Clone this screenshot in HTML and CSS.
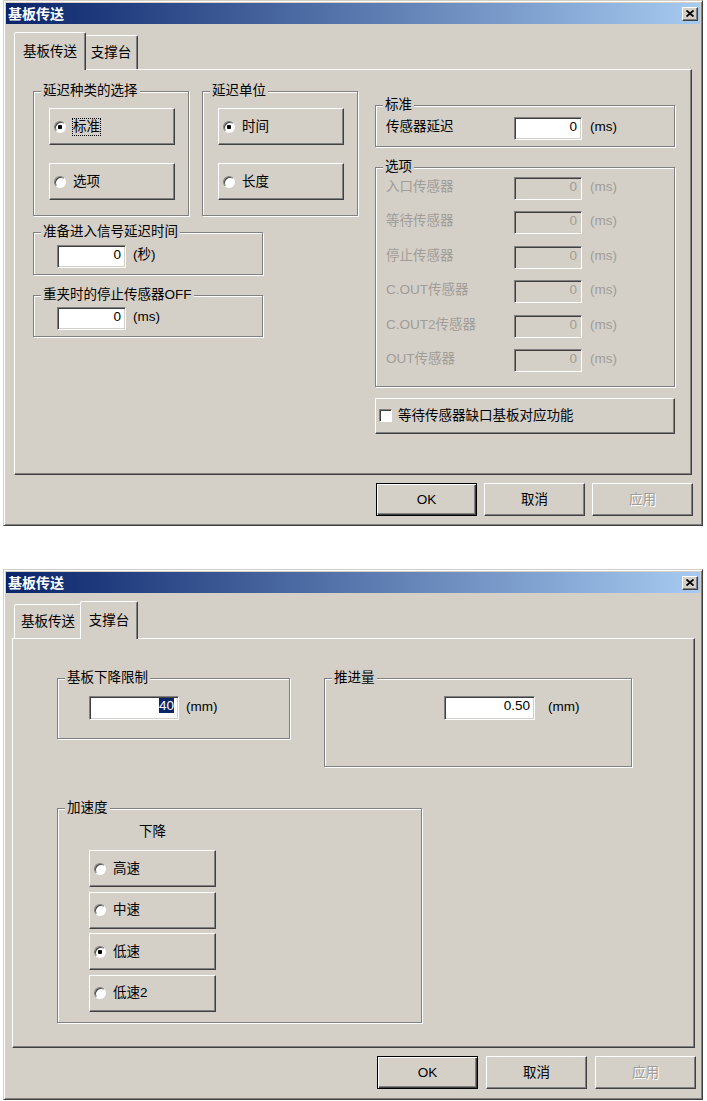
FILE: index.html
```html
<!DOCTYPE html>
<html lang="zh-CN">
<head>
    <meta charset="UTF-8">
    <title>基板传送</title>
    <link rel="stylesheet" href="styles.css">
</head>
<body>
    <!-- first page: 基板传送 -->
    <div class="dialog dialog-feed">
        <div class="titlebar">
            <span class="title">基板传送</span>
            <span class="close"><svg width="8" height="7" viewBox="0 0 8 7"><path d="M0.5 0.5 L7.5 6.5 M7.5 0.5 L0.5 6.5" stroke="#000" stroke-width="1.8" fill="none"/></svg></span>
        </div>
        <div class="tabs">
            <div class="tab tab-feed active">基板传送</div>
            <div class="tab tab-support">支撑台</div>
        </div>
        <div class="panel">
            <div class="feed-body">
                <div class="col-left">
                    <div class="group-row">
                        <div class="group group-small">
                            <span class="caption">延迟种类的选择</span>
                            <div class="choices">
                                <div class="choice"><span class="radio checked"></span><span class="focus">标准</span></div>
                                <div class="choice"><span class="radio"></span><span>选项</span></div>
                            </div>
                        </div>
                        <div class="group group-small">
                            <span class="caption">延迟单位</span>
                            <div class="choices">
                                <div class="choice"><span class="radio checked"></span><span>时间</span></div>
                                <div class="choice"><span class="radio"></span><span>长度</span></div>
                            </div>
                        </div>
                    </div>
                    <div class="group group-wide ready">
                        <span class="caption">准备进入信号延迟时间</span>
                        <div class="field-row">
                            <div class="field">0</div>
                            <span class="unit">(秒)</span>
                        </div>
                    </div>
                    <div class="group group-wide reclamp">
                        <span class="caption">重夹时的停止传感器OFF</span>
                        <div class="field-row">
                            <div class="field">0</div>
                            <span class="unit">(ms)</span>
                        </div>
                    </div>
                </div>
                <div class="col-right">
                    <div class="group">
                        <span class="caption">标准</span>
                        <div class="sensor-list standard">
                            <div class="sensor-row">
                                <span class="sensor-label">传感器延迟</span>
                                <div class="field">0</div>
                                <span class="unit">(ms)</span>
                            </div>
                        </div>
                    </div>
                    <div class="group options">
                        <span class="caption">选项</span>
                        <div class="sensor-list disabled">
                            <div class="sensor-row">
                                <span class="sensor-label">入口传感器</span>
                                <div class="field">0</div>
                                <span class="unit">(ms)</span>
                            </div>
                            <div class="sensor-row">
                                <span class="sensor-label">等待传感器</span>
                                <div class="field">0</div>
                                <span class="unit">(ms)</span>
                            </div>
                            <div class="sensor-row">
                                <span class="sensor-label">停止传感器</span>
                                <div class="field">0</div>
                                <span class="unit">(ms)</span>
                            </div>
                            <div class="sensor-row">
                                <span class="sensor-label">C.OUT传感器</span>
                                <div class="field">0</div>
                                <span class="unit">(ms)</span>
                            </div>
                            <div class="sensor-row">
                                <span class="sensor-label">C.OUT2传感器</span>
                                <div class="field">0</div>
                                <span class="unit">(ms)</span>
                            </div>
                            <div class="sensor-row">
                                <span class="sensor-label">OUT传感器</span>
                                <div class="field">0</div>
                                <span class="unit">(ms)</span>
                            </div>
                        </div>
                    </div>
                    <div class="check-box-row">
                        <span class="checkbox"></span>
                        <span>等待传感器缺口基板对应功能</span>
                    </div>
                </div>
            </div>
        </div>
        <div class="actions">
            <div class="btn btn-default">OK</div>
            <div class="btn">取消</div>
            <div class="btn btn-disabled">应用</div>
        </div>
    </div>

    <!-- second page: 支撑台 -->
    <div class="dialog dialog-support">
        <div class="titlebar">
            <span class="title">基板传送</span>
            <span class="close"><svg width="8" height="7" viewBox="0 0 8 7"><path d="M0.5 0.5 L7.5 6.5 M7.5 0.5 L0.5 6.5" stroke="#000" stroke-width="1.8" fill="none"/></svg></span>
        </div>
        <div class="tabs">
            <div class="tab tab-feed">基板传送</div>
            <div class="tab tab-support active">支撑台</div>
        </div>
        <div class="panel">
            <div class="support-body">
                <div class="group-row support-row">
                    <div class="group limit">
                        <span class="caption">基板下降限制</span>
                        <div class="field-row">
                            <div class="field field-tall"><span class="selected">40</span></div>
                            <span class="unit">(mm)</span>
                        </div>
                    </div>
                    <div class="group push">
                        <span class="caption">推进量</span>
                        <div class="field-row">
                            <div class="field field-tall">0.50</div>
                            <span class="unit">(mm)</span>
                        </div>
                    </div>
                </div>
                <div class="group accel">
                    <span class="caption">加速度</span>
                    <div class="accel-body">
                        <div class="accel-title">下降</div>
                        <div class="choices choices-tight">
                            <div class="choice"><span class="radio"></span><span>高速</span></div>
                            <div class="choice"><span class="radio"></span><span>中速</span></div>
                            <div class="choice"><span class="radio checked"></span><span>低速</span></div>
                            <div class="choice"><span class="radio"></span><span>低速2</span></div>
                        </div>
                    </div>
                </div>
            </div>
        </div>
        <div class="actions">
            <div class="btn btn-default">OK</div>
            <div class="btn">取消</div>
            <div class="btn btn-disabled">应用</div>
        </div>
    </div>
</body>
</html>
```

FILE: styles.css
```css
body {
    margin: 0;
    background: #fff;
    font-family: "Liberation Sans", "Noto Sans CJK SC", sans-serif;
    font-size: 13.5px;
    line-height: 16px;
    color: #000;
}

/* window frame */
.dialog {
    box-sizing: border-box;
    width: 700px;
    margin-left: 3px;
    padding: 2px;
    background: #d4d0c8;
    border: 1px solid;
    border-color: #d4d0c8 #404040 #404040 #d4d0c8;
    box-shadow: inset 1px 1px #fff, inset -1px -1px #808080;
}
.dialog-feed {
    height: 526px;
}
.dialog-support {
    height: 531px;
    margin-top: 43px;
}

.titlebar {
    height: 21px;
    display: flex;
    align-items: center;
    justify-content: space-between;
    padding: 0 2px;
    background: linear-gradient(90deg, #0a246a, #a6caf0);
    color: #fff;
    font-weight: bold;
    font-size: 14px;
}
.close {
    box-sizing: border-box;
    width: 16px;
    height: 14px;
    display: flex;
    align-items: center;
    justify-content: center;
    background: #d4d0c8;
    border: 1px solid;
    border-color: #fff #404040 #404040 #fff;
    box-shadow: inset -1px -1px #808080;
}

/* tabs */
.tabs {
    display: flex;
    align-items: flex-end;
    height: 37px;
    margin-top: 8px;
    padding-left: 2px;
}
.dialog-feed .tabs {
    margin-left: 8px;
}
.dialog-support .tabs {
    margin-left: 6px;
}
.tab {
    height: 33px;
    display: flex;
    align-items: center;
    justify-content: center;
    background: #d4d0c8;
    border: 1px solid;
    border-bottom: 0;
    border-color: #fff #404040 transparent #fff;
    border-radius: 2px 2px 0 0;
    box-shadow: inset -1px 0 #808080;
}
.tab-feed {
    width: 66px;
}
.tab-support {
    width: 52px;
}
.tab.active {
    position: relative;
    z-index: 1;
    height: 37px;
    padding: 0 2px;
    margin: 0 -2px -1px;
}

.panel {
    box-sizing: border-box;
    border: 1px solid;
    border-color: #fff #404040 #404040 #fff;
    box-shadow: inset -1px -1px #808080;
}
.dialog-feed .panel {
    height: 406px;
    margin: 0 8px;
}
.dialog-support .panel {
    height: 410px;
    margin: 0 5px 0 6px;
}

/* group boxes */
.group {
    border: 1px solid #808080;
    box-shadow: inset 1px 1px #fff, 1px 1px 0 #fff;
}
.caption {
    display: block;
    width: fit-content;
    margin: -9px 0 0 7px;
    padding: 0 2px;
    background: #d4d0c8;
    line-height: 16px;
}
.group-row {
    display: flex;
    align-items: flex-start;
    gap: 13px;
}
.group-small {
    width: 156px;
}
.group-wide {
    width: 228px;
}

.choices {
    display: flex;
    flex-direction: column;
    gap: 18px;
    padding: 9px 0 15px 15px;
}
.choice {
    box-sizing: border-box;
    width: 126px;
    height: 37px;
    display: flex;
    align-items: center;
    gap: 7px;
    padding-left: 4px;
    border: 1px solid;
    border-color: #fff #404040 #404040 #fff;
    box-shadow: inset -1px -1px #808080;
}
.radio {
    box-sizing: border-box;
    width: 12px;
    height: 12px;
    border-radius: 50%;
    background: #fff;
    border: 1px solid;
    border-color: #808080 #fff #fff #808080;
    box-shadow: inset 1px 1px #404040;
}
.radio.checked {
    background: radial-gradient(circle, #000 0, #000 2px, #fff 2.5px);
}
.focus {
    outline: 1px dotted #000;
}

/* edit fields */
.field {
    box-sizing: border-box;
    width: 69px;
    height: 23px;
    padding: 2px 4px 0;
    text-align: right;
    line-height: 13px;
    background: #fff;
    border: 1px solid;
    border-color: #808080 #fff #fff #808080;
    box-shadow: inset 1px 1px #404040, inset -1px -1px #d4d0c8;
}
.field-row {
    display: flex;
    align-items: center;
    gap: 7px;
    padding: 4px 0 6px 23px;
}
.ready {
    margin-top: 16px;
}
.ready .field-row {
    padding-top: 5px;
}
.reclamp {
    margin-top: 20px;
}
.unit {
    margin-top: -3px;
}

/* first page layout */
.feed-body {
    display: flex;
    padding: 21px 0 0 18px;
}
.col-left {
    width: 325px;
}
.col-right {
    width: 300px;
    margin: 14px 0 0 17px;
}
.sensor-list {
    display: flex;
    flex-direction: column;
    gap: 11.4px;
    padding: 4px 0 6px 10px;
}
.sensor-row {
    display: flex;
    align-items: center;
}
.sensor-label {
    width: 128px;
    margin-top: -3px;
}
.sensor-row .field {
    width: 68px;
    margin-right: 8px;
}
.options {
    margin-top: 20px;
}
.options .sensor-list {
    padding: 2px 0 14px 10px;
}
.disabled {
    color: #a09c97;
}
.disabled .field {
    background: #d4d0c8;
}

.check-box-row {
    box-sizing: border-box;
    height: 36px;
    margin-top: 11px;
    display: flex;
    align-items: center;
    gap: 6px;
    padding-left: 3px;
    border: 1px solid;
    border-color: #fff #404040 #404040 #fff;
    box-shadow: inset -1px -1px #808080;
}
.checkbox {
    box-sizing: border-box;
    width: 13px;
    height: 13px;
    background: #fff;
    border: 1px solid;
    border-color: #808080 #fff #fff #808080;
    box-shadow: inset 1px 1px #404040;
}

/* second page layout */
.support-body {
    padding: 39px 0 0 44px;
}
.support-row {
    gap: 34px;
}
.limit {
    width: 231px;
}
.limit .field-row {
    padding: 10px 0 18px 31px;
}
.push {
    width: 306px;
}
.push .field-row {
    padding: 10px 0 46px 119px;
    gap: 13px;
}
.field-tall {
    width: 90px;
    height: 24px;
}
.push .field-tall {
    width: 91px;
}
.selected {
    background: #0a246a;
    color: #fff;
}
.accel {
    width: 363px;
    margin-top: 41px;
}
.accel-body {
    padding: 8px 0 10px 31px;
}
.accel-title {
    padding-left: 50px;
}
.choices-tight {
    gap: 4.67px;
    padding: 10px 0 0;
}
.choices-tight .choice {
    width: 127px;
}

/* bottom buttons */
.actions {
    display: flex;
    justify-content: flex-end;
    margin-top: 8px;
}
.dialog-feed .actions {
    gap: 7px;
    padding-right: 7px;
}
.dialog-support .actions {
    gap: 8px;
    padding-right: 4px;
}
.btn {
    box-sizing: border-box;
    width: 101px;
    height: 33px;
    display: flex;
    align-items: center;
    justify-content: center;
    border: 1px solid;
    border-color: #fff #404040 #404040 #fff;
    box-shadow: inset -1px -1px #808080;
}
.btn-default {
    border-color: #000;
    box-shadow: inset 1px 1px #fff, inset -1px -1px #404040, inset -2px -2px #808080;
}
.btn-disabled {
    color: #a09c97;
    text-shadow: 1px 1px #fff;
}
```
